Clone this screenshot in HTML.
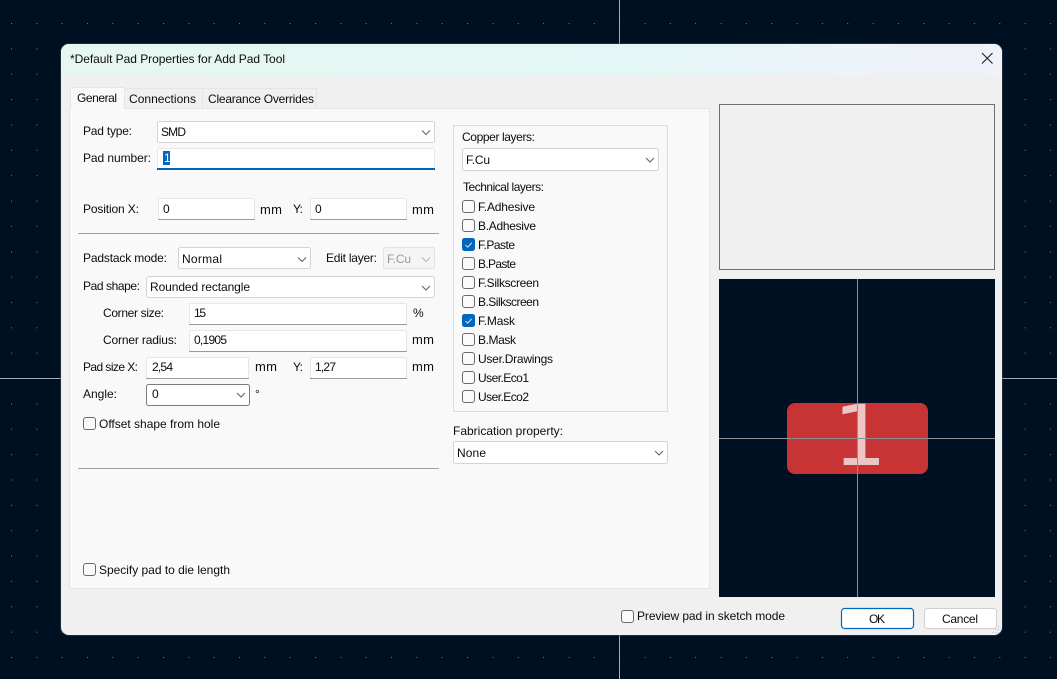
<!DOCTYPE html>
<html><head><meta charset="utf-8"><title>Default Pad Properties</title>
<style>
html,body{margin:0;padding:0;width:1057px;height:679px;overflow:hidden;background:#001023}
svg{position:absolute;left:0;top:0;display:block}
text{font-family:"Liberation Sans",sans-serif;font-size:12px;fill:#0c0c0c}
text.m{font-size:13px}
.f{fill:#fff;stroke:#d4d4d4;stroke-width:1}
.c{fill:none;stroke:#606060;stroke-width:1}
.cb{fill:#fafafa;stroke:#6a6a6a;stroke-width:1}
.inp{fill:#fff;stroke:#e6e6e6;stroke-width:1}
</style></head><body>
<svg width="1057" height="679" viewBox="0 0 1057 679" xmlns="http://www.w3.org/2000/svg">
<defs>
<pattern id="g" x="11" y="23" width="25.34" height="25.36" patternUnits="userSpaceOnUse"><rect width="1" height="1" fill="#6f7b88"/></pattern>
<linearGradient id="t" x1="0" x2="1" y1="0" y2="0"><stop offset="0" stop-color="#e6f7f1"/><stop offset=".6" stop-color="#e3f7f6"/><stop offset=".8" stop-color="#ebf3f9"/><stop offset="1" stop-color="#eff2f8"/></linearGradient>
<clipPath id="d"><rect x="61" y="44" width="941" height="591" rx="8"/></clipPath>
</defs>
<rect width="1057" height="679" fill="#001023"/>
<rect width="1057" height="679" fill="url(#g)" shape-rendering="crispEdges"/>
<g shape-rendering="crispEdges" fill="#a6abb0">
<rect x="619" y="0" width="1" height="44"/><rect x="619" y="635" width="1" height="44"/>
<rect x="0" y="378" width="61" height="1"/><rect x="1002" y="378" width="55" height="1"/>
</g>
<rect x="60.500" y="43.500" width="942" height="592" rx="8" fill="#3c4652"/>
<g clip-path="url(#d)">
<rect x="61" y="44" width="941" height="591" fill="#f0f0f0"/>
<rect x="61" y="44" width="941" height="31" fill="url(#t)"/>
</g>
<text x="70" y="63" textLength="215">*Default Pad Properties for Add Pad Tool</text>
<path d="M982 53L992.500 63.500M992.500 53L982 63.500" stroke="#222" stroke-width="1.100" fill="none"/>

<rect x="69.500" y="108.500" width="640" height="480" fill="#f9f9f9" stroke="#e5e5e5"/>
<path d="M124.500 108V88.500H202.500V108M202.500 88.500H316.500V108" fill="#f0f0f0" stroke="#e5e5e5"/>
<path d="M70.500 109V87.500H124.500V109" fill="#f9f9f9" stroke="#e5e5e5"/>
<rect x="71" y="107" width="53" height="3" fill="#f9f9f9"/>
<text x="77" y="102" textLength="40">General</text>
<text x="129" y="103" textLength="67">Connections</text>
<text x="208" y="103" textLength="106">Clearance Overrides</text>

<text x="83" y="135" textLength="49">Pad type:</text>
<rect class="f" x="157.500" y="121.500" width="277" height="21" rx="2"/>
<text x="161" y="136" textLength="25">SMD</text>
<path class="c" d="M422 130.500l4 4 4-4"/>
<text x="83" y="162" textLength="68">Pad number:</text>
<rect class="inp" x="157.500" y="148.500" width="277" height="21" rx="2"/>
<rect x="157" y="168" width="278" height="2" fill="#0067c0"/>
<rect x="163" y="151" width="7" height="14" fill="#0067c0"/>
<text x="164" y="162" style="fill:#fff">1</text>

<text x="83" y="213" textLength="56">Position X:</text>
<rect class="inp" x="158.500" y="198.500" width="96" height="21" rx="2"/><rect x="158" y="219" width="97" height="1" fill="#9a9a9a"/>
<text x="163" y="213">0</text><text class="m" x="260" y="214" textLength="22">mm</text>
<text x="293" y="213" textLength="10">Y:</text>
<rect class="inp" x="310.500" y="198.500" width="96" height="21" rx="2"/><rect x="310" y="219" width="97" height="1" fill="#9a9a9a"/>
<text x="315" y="213">0</text><text class="m" x="412" y="214" textLength="22">mm</text>
<rect x="78" y="233" width="361" height="1" fill="#a0a0a0"/>

<text x="83" y="262" textLength="84">Padstack mode:</text>
<rect class="f" x="178.500" y="247.500" width="132" height="21" rx="2"/>
<text x="182" y="263" textLength="40">Normal</text>
<path class="c" d="M298 257.500l4 4 4-4"/>
<text x="326" y="262" textLength="51">Edit layer:</text>
<rect x="383.500" y="247.500" width="51" height="21" rx="2" fill="#f5f5f5" stroke="#e2e2e2"/>
<text x="387" y="263" textLength="24" style="fill:#9a9a9a">F.Cu</text>
<path d="M422 257.500l4 4 4-4" fill="none" stroke="#b5b5b5"/>

<text x="83" y="290" textLength="57">Pad shape:</text>
<rect class="f" x="146.500" y="276.500" width="288" height="21" rx="2"/>
<text x="150" y="291" textLength="100">Rounded rectangle</text>
<path class="c" d="M422 286l4 4 4-4"/>

<text x="103" y="317" textLength="61">Corner size:</text>
<rect class="inp" x="189.500" y="303.500" width="217" height="21" rx="2"/><rect x="189" y="324" width="218" height="1" fill="#9a9a9a"/>
<text x="194" y="317" textLength="12">15</text><text x="413" y="317" textLength="9">%</text>
<text x="103" y="344" textLength="74">Corner radius:</text>
<rect class="inp" x="189.500" y="330.500" width="217" height="21" rx="2"/><rect x="189" y="351" width="218" height="1" fill="#9a9a9a"/>
<text x="194" y="344" textLength="33">0,1905</text><text class="m" x="412" y="344" textLength="22">mm</text>

<text x="83" y="371" textLength="55">Pad size X:</text>
<rect class="inp" x="146.500" y="357.500" width="102" height="21" rx="2"/><rect x="146" y="378" width="103" height="1" fill="#9a9a9a"/>
<text x="152" y="371" textLength="21">2,54</text><text class="m" x="255" y="371" textLength="22">mm</text>
<text x="293" y="371" textLength="10">Y:</text>
<rect class="inp" x="310.500" y="357.500" width="96" height="21" rx="2"/><rect x="310" y="378" width="97" height="1" fill="#9a9a9a"/>
<text x="315" y="371" textLength="21">1,27</text><text class="m" x="412" y="371" textLength="22">mm</text>

<text x="83" y="398" textLength="34">Angle:</text>
<rect x="146.500" y="384.500" width="103" height="21" rx="2" fill="#fff" stroke="#7c7c7c"/>
<text x="152" y="398">0</text>
<path class="c" d="M237 393l4 4 4-4"/>
<text x="255" y="398">°</text>

<rect class="cb" x="83.500" y="417.500" width="12" height="12" rx="2.500"/>
<text x="99" y="428" textLength="121">Offset shape from hole</text>
<rect x="78" y="468" width="361" height="1" fill="#a0a0a0"/>
<rect class="cb" x="83.500" y="563.500" width="12" height="12" rx="2.500"/>
<text x="99" y="574" textLength="131">Specify pad to die length</text>

<rect x="453.500" y="125.500" width="214" height="286" fill="none" stroke="#dcdcdc"/>
<text x="462" y="141" textLength="73">Copper layers:</text>
<rect class="f" x="462.500" y="148.500" width="196" height="22" rx="2"/>
<text x="466" y="164" textLength="24">F.Cu</text>
<path class="c" d="M646 158l4 4 4-4"/>
<text x="463" y="191" textLength="81">Technical layers:</text>

<rect class="cb" x="462.500" y="200.500" width="12" height="12" rx="2.500"/><text x="478" y="211" textLength="57">F.Adhesive</text>
<rect class="cb" x="462.500" y="219.500" width="12" height="12" rx="2.500"/><text x="478" y="230" textLength="58">B.Adhesive</text>
<rect x="462" y="238" width="13" height="13" rx="2.500" fill="#0067c0"/><path d="M465.500 245l2.200 2.200 4-4.400" fill="none" stroke="#fff" stroke-width=".8"/><text x="478" y="249" textLength="37">F.Paste</text>
<rect class="cb" x="462.500" y="257.500" width="12" height="12" rx="2.500"/><text x="478" y="268" textLength="38">B.Paste</text>
<rect class="cb" x="462.500" y="276.500" width="12" height="12" rx="2.500"/><text x="478" y="287" textLength="61">F.Silkscreen</text>
<rect class="cb" x="462.500" y="295.500" width="12" height="12" rx="2.500"/><text x="478" y="306" textLength="61">B.Silkscreen</text>
<rect x="462" y="314" width="13" height="13" rx="2.500" fill="#0067c0"/><path d="M465.500 321l2.200 2.200 4-4.400" fill="none" stroke="#fff" stroke-width=".8"/><text x="478" y="325" textLength="37">F.Mask</text>
<rect class="cb" x="462.500" y="333.500" width="12" height="12" rx="2.500"/><text x="478" y="344" textLength="38">B.Mask</text>
<rect class="cb" x="462.500" y="352.500" width="12" height="12" rx="2.500"/><text x="478" y="363" textLength="75">User.Drawings</text>
<rect class="cb" x="462.500" y="371.500" width="12" height="12" rx="2.500"/><text x="478" y="382" textLength="51">User.Eco1</text>
<rect class="cb" x="462.500" y="390.500" width="12" height="12" rx="2.500"/><text x="478" y="401" textLength="51">User.Eco2</text>

<text x="453" y="435" textLength="110">Fabrication property:</text>
<rect class="f" x="453.500" y="441.500" width="214" height="22" rx="2"/>
<text x="457" y="457" textLength="29">None</text>
<path class="c" d="M655 451l4 4 4-4"/>

<rect x="719.500" y="104.500" width="275" height="165" fill="#f0f0f0" stroke="#6e6e6e"/>
<rect x="719" y="279" width="276" height="318" fill="#001023"/>
<rect x="787" y="403" width="141" height="71" rx="8" fill="#c83434"/>
<text x="860" y="465" text-anchor="middle" style="font-family:'DejaVu Sans',sans-serif;font-size:84px;fill:#edc5c7">1</text>
<g shape-rendering="crispEdges" fill="#8d9195">
<rect x="857" y="279" width="1" height="318"/>
<rect x="719" y="438" width="276" height="1"/>
</g>

<rect class="cb" x="621.500" y="610.500" width="12" height="12" rx="2.500"/>
<text x="637" y="620" textLength="148">Preview pad in sketch mode</text>
<rect x="841.500" y="608.500" width="72" height="20" rx="3" fill="#fff" stroke="#0067c0" stroke-width="1.200"/>
<text x="869" y="623" textLength="16">OK</text>
<rect x="924.500" y="608.500" width="72" height="20" rx="3" fill="#fff" stroke="#cfcfcf"/>
<text x="942" y="623" textLength="36">Cancel</text>
<g fill="#c0c0c0" shape-rendering="crispEdges">
<rect x="998" y="626" width="1" height="1"/><rect x="998" y="629" width="1" height="1"/><rect x="995" y="629" width="1" height="1"/><rect x="998" y="632" width="1" height="1"/><rect x="995" y="632" width="1" height="1"/><rect x="992" y="632" width="1" height="1"/>
</g>
</svg>
</body></html>
